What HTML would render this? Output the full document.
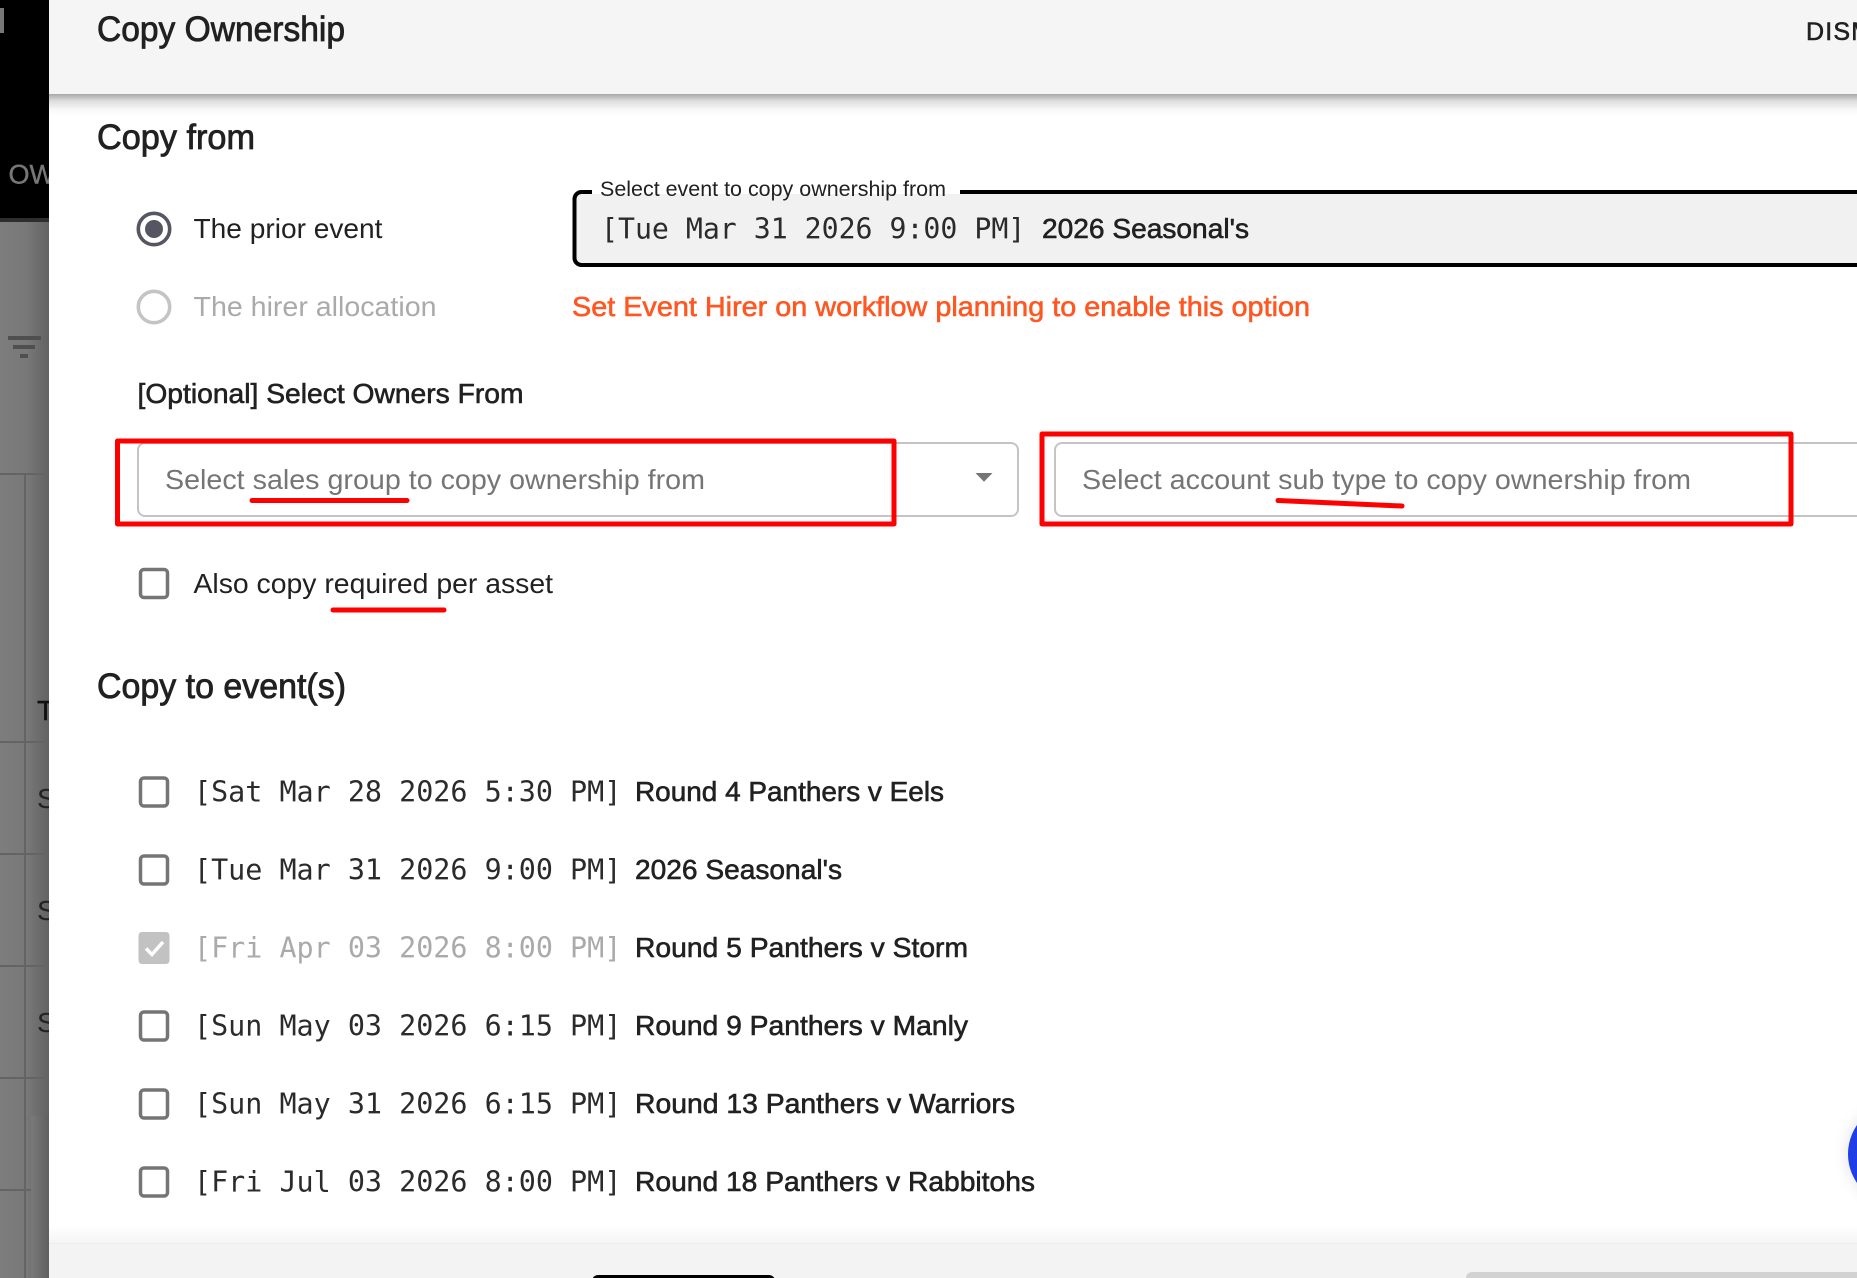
<!DOCTYPE html>
<html lang="en">
<head>
<meta charset="utf-8">
<title>Copy Ownership</title>
<style>
html,body{margin:0;padding:0;background:#fff;width:1857px;height:1278px;overflow:hidden}
svg{display:block}
text{font-family:"Liberation Sans",Arial,sans-serif;font-size:28px;fill:#212121;white-space:pre}
.m{font-family:"DejaVu Sans Mono","Liberation Mono",monospace;font-size:28.4px;fill:#2b2b2b}
.med{stroke:#212121;stroke-width:.6px}
.h{font-size:35px;stroke:#212121;stroke-width:.8px}
.box{fill:#fff;stroke:#757575;stroke-width:3.5px}
.ph{fill:#757575}
.dis{fill:#aaa}
.red{fill:none;stroke:#f00;stroke-width:5px;stroke-linejoin:round;stroke-linecap:round}
</style>
</head>
<body>
<svg width="1857" height="1278" viewBox="0 0 1857 1278" xmlns="http://www.w3.org/2000/svg">
<defs>
<linearGradient id="bg" x1="0" x2="1" y1="0" y2="0"><stop offset="0" stop-color="#7d7d7d"/><stop offset=".55" stop-color="#787878"/><stop offset="1" stop-color="#626262"/></linearGradient>
<linearGradient id="pn" x1="0" x2="1" y1="0" y2="0"><stop offset="0" stop-color="#7a7a7a"/><stop offset="1" stop-color="#5f5f5f"/></linearGradient>
<linearGradient id="hs" x1="0" x2="0" y1="0" y2="1"><stop offset="0" stop-color="#000" stop-opacity=".34"/><stop offset=".3" stop-color="#000" stop-opacity=".14"/><stop offset=".7" stop-color="#000" stop-opacity=".03"/><stop offset="1" stop-color="#000" stop-opacity="0"/></linearGradient>
<linearGradient id="fs" x1="0" x2="0" y1="0" y2="1"><stop offset="0" stop-color="#000" stop-opacity="0"/><stop offset="1" stop-color="#000" stop-opacity=".04"/></linearGradient>
<filter id="blur" x="-30%" y="-30%" width="160%" height="160%"><feGaussianBlur stdDeviation="8"/></filter>
</defs>

<!-- Dimmed page behind the dialog -->
<rect x="0" y="0" width="49" height="1278" fill="url(#bg)"/>
<rect x="0" y="0" width="49" height="218" fill="#000"/>
<rect x="0" y="218" width="49" height="4" fill="#2e2e2e"/>
<rect x="0" y="8" width="4" height="25" fill="#777"/>
<text x="8.500" y="183.500" style="fill:#777;font-size:27px;stroke:#777;stroke-width:.4px">OW</text>
<rect x="8" y="336" width="33" height="4" fill="#4f4f4f"/>
<rect x="13" y="345" width="22" height="4" fill="#4f4f4f"/>
<rect x="20" y="354" width="8" height="4" fill="#4f4f4f"/>
<g fill="#646464">
<rect x="0" y="473" width="49" height="2"/>
<rect x="24" y="474" width="2" height="804"/>
<rect x="0" y="741" width="49" height="2"/>
<rect x="0" y="853" width="49" height="2"/>
<rect x="0" y="965" width="49" height="2"/>
<rect x="0" y="1077" width="49" height="2"/>
<rect x="0" y="1189" width="31" height="2"/>
</g>
<text x="37" y="720" style="font-size:28px;fill:#111;stroke:#111;stroke-width:.4px">T</text>
<text x="37" y="808" style="font-size:28px;fill:#222">S</text>
<text x="37" y="920" style="font-size:28px;fill:#222">S</text>
<text x="37" y="1032" style="font-size:28px;fill:#222">S</text>
<rect x="31" y="1116" width="18" height="162" fill="url(#pn)"/>

<!-- Dialog -->
<rect x="49" y="0" width="1808" height="1278" fill="#fff"/>
<rect x="49" y="0" width="1808" height="94" fill="#f5f5f5"/>
<rect x="49" y="94" width="1808" height="22" fill="url(#hs)"/>
<text class="h" x="97" y="41" textLength="248" lengthAdjust="spacingAndGlyphs">Copy Ownership</text>
<text class="med" x="1806" y="40" style="font-size:25px;letter-spacing:1.2px">DISMISS</text>

<text class="h" x="97" y="149" textLength="158" lengthAdjust="spacingAndGlyphs">Copy from</text>

<!-- Radios -->
<circle cx="154" cy="229" r="15.7" fill="none" stroke="#565662" stroke-width="3.6"/>
<circle cx="154" cy="229" r="9" fill="#565662"/>
<text x="193.500" y="238" textLength="189" lengthAdjust="spacingAndGlyphs">The prior event</text>
<circle cx="154" cy="307" r="15.7" fill="none" stroke="#c4c4c4" stroke-width="3.6"/>
<text class="dis" x="193.500" y="316" textLength="243" lengthAdjust="spacingAndGlyphs">The hirer allocation</text>

<!-- Select event -->
<rect x="574.500" y="192" width="1300" height="73" rx="7" fill="#f1f1f1" stroke="#000" stroke-width="4"/>
<rect x="592" y="186" width="368" height="8" fill="#fff"/>
<text x="600" y="196" style="font-size:21px" textLength="346" lengthAdjust="spacingAndGlyphs">Select event to copy ownership from</text>
<text class="m" x="601" y="238.500" style="font-size:28.2px">[Tue Mar 31 2026 9:00 PM]</text>
<text class="med" x="1042" y="238" textLength="207" lengthAdjust="spacingAndGlyphs">2026 Seasonal's</text>
<text class="med" x="572" y="316" style="fill:#ff5722;stroke:#ff5722" textLength="738" lengthAdjust="spacingAndGlyphs">Set Event Hirer on workflow planning to enable this option</text>

<text class="med" x="137.500" y="403" textLength="386" lengthAdjust="spacingAndGlyphs">[Optional] Select Owners From</text>

<!-- Selects -->
<rect x="138" y="443" width="880" height="73" rx="7" fill="#fff" stroke="#c4c4c4" stroke-width="2"/>
<text class="ph" x="165" y="489" textLength="540" lengthAdjust="spacingAndGlyphs">Select sales group to copy ownership from</text>
<path d="M975.500 473h17l-8.500 8.800z" fill="#757575"/>
<rect x="1055" y="443" width="900" height="73" rx="7" fill="#fff" stroke="#c4c4c4" stroke-width="2"/>
<text class="ph" x="1082" y="489" textLength="609" lengthAdjust="spacingAndGlyphs">Select account sub type to copy ownership from</text>

<!-- Red annotations -->
<rect class="red" x="117.500" y="441" width="776.500" height="83"/>
<rect class="red" x="1042" y="434" width="749" height="90"/>
<path class="red" d="M252 500.500H407"/>
<path class="red" d="M1278 500.500L1402 506"/>
<path class="red" d="M333 610H444"/>

<!-- Also copy -->
<rect class="box" x="140.500" y="569.500" width="27" height="28" rx="3.500"/>
<text x="193.500" y="593" textLength="359.500" lengthAdjust="spacingAndGlyphs">Also copy required per asset</text>

<text class="h" x="97" y="698" textLength="249" lengthAdjust="spacingAndGlyphs">Copy to event(s)</text>

<!-- Event list -->
<rect class="box" x="140.500" y="778" width="27" height="28" rx="3.500"/>
<text class="m" x="194" y="801.500">[Sat Mar 28 2026 5:30 PM]</text>
<text class="med" x="635" y="801" textLength="309" lengthAdjust="spacingAndGlyphs">Round 4 Panthers v Eels</text>

<rect class="box" x="140.500" y="856" width="27" height="28" rx="3.500"/>
<text class="m" x="194" y="879.500">[Tue Mar 31 2026 9:00 PM]</text>
<text class="med" x="635" y="879" textLength="207" lengthAdjust="spacingAndGlyphs">2026 Seasonal's</text>

<rect x="138.500" y="932" width="31" height="32" rx="3.500" fill="#c2c2c2"/>
<path d="M146 948.500l6 6 11-12.500" fill="none" stroke="#fff" stroke-width="3.500"/>
<text class="m dis" x="194" y="957.500">[Fri Apr 03 2026 8:00 PM]</text>
<text class="med" x="635" y="957" textLength="333" lengthAdjust="spacingAndGlyphs">Round 5 Panthers v Storm</text>

<rect class="box" x="140.500" y="1012" width="27" height="28" rx="3.500"/>
<text class="m" x="194" y="1035.500">[Sun May 03 2026 6:15 PM]</text>
<text class="med" x="635" y="1035" textLength="333" lengthAdjust="spacingAndGlyphs">Round 9 Panthers v Manly</text>

<rect class="box" x="140.500" y="1090" width="27" height="28" rx="3.500"/>
<text class="m" x="194" y="1113.500">[Sun May 31 2026 6:15 PM]</text>
<text class="med" x="635" y="1113" textLength="380" lengthAdjust="spacingAndGlyphs">Round 13 Panthers v Warriors</text>

<rect class="box" x="140.500" y="1168" width="27" height="28" rx="3.500"/>
<text class="m" x="194" y="1191.500">[Fri Jul 03 2026 8:00 PM]</text>
<text class="med" x="635" y="1191" textLength="400" lengthAdjust="spacingAndGlyphs">Round 18 Panthers v Rabbitohs</text>

<!-- Floating blue button -->
<circle cx="1899" cy="1154" r="51" fill="#000" opacity=".12" filter="url(#blur)"/>
<circle cx="1899" cy="1154" r="51" fill="#1f3ee6"/>

<!-- Footer -->
<rect x="49" y="1225" width="1808" height="18" fill="url(#fs)"/>
<rect x="49" y="1243" width="1808" height="35" fill="#f3f3f3"/>
<rect x="49" y="1243" width="1808" height="1" fill="#ececec"/>
<rect x="592" y="1275" width="183" height="20" rx="6" fill="#000"/>
<rect x="1466" y="1272" width="420" height="20" rx="6" fill="#d2d2d2"/>
</svg>
</body>
</html>
